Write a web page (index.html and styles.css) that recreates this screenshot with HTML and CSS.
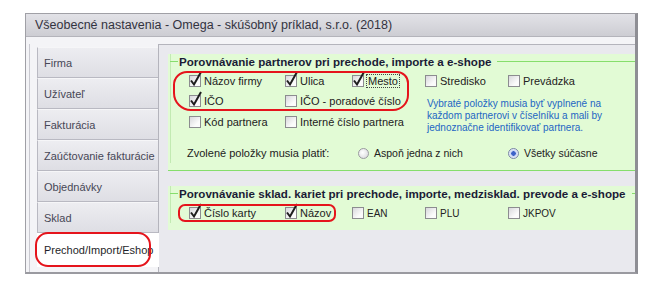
FILE: index.html
```html
<!DOCTYPE html>
<html lang="sk">
<head>
  <meta charset="UTF-8" />
  <title>Všeobecné nastavenia</title>
  <link rel="stylesheet" href="styles.css">
</head>
<body>
  <div class="window">
    <div class="titlebar">Všeobecné nastavenia - Omega - skúšobný príklad, s.r.o. (2018)</div>

    <div class="main">
      <div class="frame">
        <div class="tabs">
          <div class="tab">Firma</div>
          <div class="tab">Užívateľ</div>
          <div class="tab">Fakturácia</div>
          <div class="tab">Zaúčtovanie fakturácie</div>
          <div class="tab">Objednávky</div>
          <div class="tab">Sklad</div>
          <div class="tab active">Prechod/Import/Eshop</div>
        </div>

        <div class="content">
          <div class="group first">
            <div class="box">
              <div class="legend">Porovnávanie partnerov pri prechode, importe a e-shope</div>
              <div class="grid">
                <label class="chk on">Názov firmy</label>
                <label class="chk on">Ulica</label>
                <label class="chk on"><span class="focus">Mesto</span></label>
                <label class="chk">Stredisko</label>
                <label class="chk">Prevádzka</label>

                <label class="chk on">IČO</label>
                <label class="chk wide">IČO - poradové číslo</label>
                <p class="note">Vybraté položky musia byť vyplnené na každom partnerovi v číselníku a mali by jednoznačne identifikovať partnera.</p>

                <label class="chk">Kód partnera</label>
                <label class="chk wide">Interné číslo partnera</label>
              </div>
              <div class="radios">
                <span class="radio-label">Zvolené položky musia platiť:</span>
                <label class="radio">Aspoň jedna z nich</label>
                <label class="radio on">Všetky súčasne</label>
              </div>
            </div>
          </div>

          <div class="group second">
            <div class="box">
              <div class="legend">Porovnávanie sklad. kariet pri prechode, importe, medzisklad. prevode a e-shope</div>
              <div class="grid one">
                <label class="chk on">Číslo karty</label>
                <label class="chk on">Názov</label>
                <label class="chk small">EAN</label>
                <label class="chk small">PLU</label>
                <label class="chk small">JKPOV</label>
              </div>
            </div>
          </div>
        </div>
      </div>
    </div>

    <div class="mark mark-partner"></div>
    <div class="mark mark-card"></div>
    <div class="mark mark-tab"></div>
  </div>

  <script>
    // checkbox boxes with the tick drawn as svg
    const tick = '<svg width="14" height="16" viewBox="0 0 14 16"><path d="M3 9.5 L6 13.5 L13 1" fill="none" stroke="#1e1e1e" stroke-width="2"/></svg>'
    document.querySelectorAll('.chk').forEach(el => {
      const box = document.createElement('span')
      box.className = 'cb'
      if (el.classList.contains('on')) box.innerHTML = tick
      el.prepend(box)
    })
    document.querySelectorAll('.radio').forEach(el => {
      const dot = document.createElement('span')
      dot.className = 'rb'
      el.prepend(dot)
    })
  </script>
</body>
</html>
```

FILE: styles.css
```css
body {
  margin: 13px 0 0 25px;
  background: #fff;
  font-family: 'Liberation Sans', Arial, sans-serif;
  font-size: 11px;
  color: #222;
}
.window {
  position: relative;
  width: 609px;
  border: 1px solid #a0a0a6;
  border-right: 3px solid #8e8e94;
  border-bottom: 2px solid #9a9aa0;
}
.titlebar {
  height: 23px;
  line-height: 23px;
  padding-left: 9px;
  font-size: 12.5px;
  color: #33333f;
  background: linear-gradient(#e2e2e7, #cdcdd3);
  border-bottom: 1px solid #b4b4bb;
  box-sizing: border-box;
}
.main {
  height: 235px;
  padding: 7px 0 0 3px;
  background: #f4f4f7;
  box-sizing: border-box;
  display: flex;
}
.frame {
  flex: 1;
  min-width: 0;
  display: flex;
  border-left: 1px solid #c9c9d0;
  padding-left: 7px;
}
.tabs {
  width: 121px;
  flex: none;
  padding-top: 3px;
  display: flex;
  flex-direction: column;
}
.tab {
  height: 31px;
  box-sizing: border-box;
  padding-left: 6px;
  display: flex;
  align-items: center;
  color: #474756;
  background: linear-gradient(#ededf1, #dedee4);
  border: 1px solid #b9b9c2;
  border-right: none;
  border-top-color: #f6f6f8;
  white-space: nowrap;
}
.tab.active {
  height: 34px;
  background: #fff;
  color: #1f1f2a;
  margin-right: -1px;
  position: relative;
  border-color: #fff;
}
.content {
  flex: 1;
  min-width: 0;
  overflow: hidden;
  background: #e9e9ee;
  border-top: 1px solid #b4b4bc;
  border-left: 1px solid #b4b4bc;
  padding: 9px 0 0 9px;
}
.group {
  background: #e2fbd5;
  padding-top: 7px;
}
.group.first {
  height: 117px;
  box-sizing: border-box;
  border-bottom: 1px solid #86de6c;
}
.group.second {
  margin-top: 15px;
  height: 44px;
  box-sizing: border-box;
}
.box {
  margin-left: 2px;
  border-left: 1px solid #c2eab2;
  height: 100%;
}
.legend {
  margin-top: -7px;
  height: 14px;
  display: flex;
  align-items: center;
  font-size: 11.6px;
  font-weight: bold;
  color: #1b1b36;
  white-space: nowrap;
}
.legend::before {
  content: '';
  width: 8px;
  border-top: 1px solid #86de6c;
  margin: 0 1px 0 -1px;
}
.legend::after {
  content: '';
  flex: 1;
  border-top: 1px solid #86de6c;
  margin-left: 6px;
}
.grid {
  display: grid;
  grid-template-columns: 96px 67px 73px 83px auto;
  grid-template-rows: 20px 20px 22px;
  margin: 3px 0 0 18px;
}
.grid.one {
  grid-template-rows: 20px;
  margin-top: 3px;
}
.chk {
  display: flex;
  align-items: center;
  gap: 3px;
  color: #222;
  white-space: nowrap;
}
.chk.wide {
  grid-column: 2 / 4;
}
.chk.small {
  font-size: 10px;
}
.cb {
  position: relative;
  width: 12px;
  height: 12px;
  box-sizing: border-box;
  border: 1px solid #8c8c90;
  background: linear-gradient(135deg, #d8d8dc, #fbfbfb 70%);
  flex: none;
}
.cb svg {
  position: absolute;
  left: -2px;
  top: -5px;
}
.focus {
  outline: 1px dotted #444;
  outline-offset: 0;
  padding: 0 1px;
}
.note {
  grid-column: 4 / 6;
  grid-row: 2 / 4;
  margin: 0;
  padding: 7px 0 0 2px;
  font-size: 10px;
  line-height: 12px;
  color: #2266c4;
  width: 190px;
}
.radios {
  display: flex;
  align-items: center;
  height: 20px;
  margin: 10px 0 0 16px;
}
.radio-label {
  width: 171px;
  flex: none;
}
.radio {
  width: 150px;
  flex: none;
  display: flex;
  align-items: center;
  gap: 5px;
  font-size: 10.5px;
}
.rb {
  width: 11px;
  height: 11px;
  box-sizing: border-box;
  border-radius: 50%;
  border: 1px solid #9a9aa0;
  background: radial-gradient(circle at 40% 40%, #fff, #d4d4d8);
}
.radio.on .rb {
  border-color: #7a86a6;
  background: radial-gradient(circle, #3d62c8 0 2px, #c4d2f2 2.5px, #eef2fa 5px);
}
.mark {
  position: absolute;
  border: 2.5px solid #e5141c;
  pointer-events: none;
}
.mark-partner {
  left: 147px;
  top: 57px;
  width: 232px;
  height: 36px;
  border-radius: 14px 12px 16px 18px;
}
.mark-card {
  left: 152px;
  top: 190px;
  width: 154px;
  height: 14px;
  border-radius: 7px;
}
.mark-tab {
  left: 9px;
  top: 218px;
  width: 112px;
  height: 31px;
  border-radius: 13px;
}
```
